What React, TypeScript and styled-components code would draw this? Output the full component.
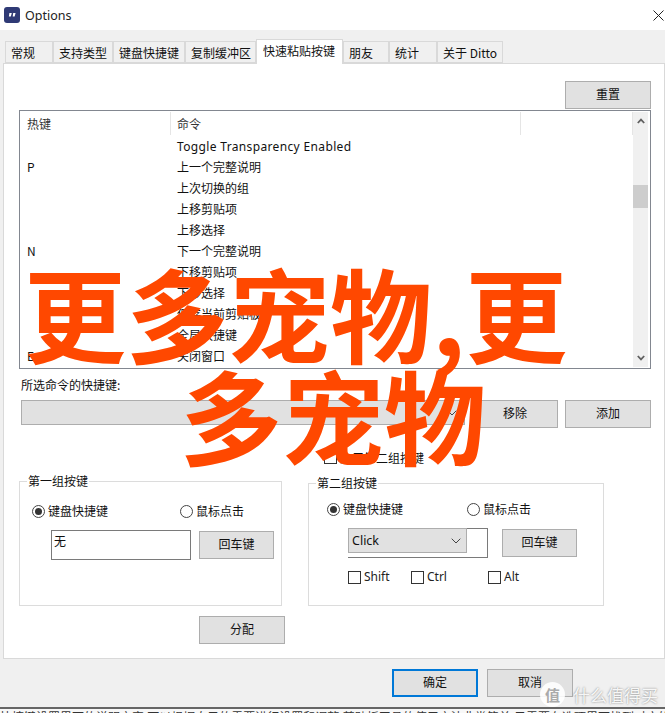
import styled, { createGlobalStyle } from 'styled-components';

const GlobalStyle = createGlobalStyle`
  html, body {
    margin: 0;
    padding: 0;
    background: #fff;
  }
  body {
    width: 665px;
    height: 713px;
    overflow: hidden;
    font-family: 'Noto Sans CJK SC', 'Noto Sans', sans-serif;
    font-size: 12px;
    color: #111;
  }
`;

const Page = styled.div`
  position: relative;
  width: 665px;
  height: 713px;
  overflow: hidden;
  display: flex;
  flex-direction: column;
  background: #f0f0f0;
`;

const TitleBar = styled.div`
  height: 30px;
  flex: none;
  display: flex;
  align-items: center;
  gap: 5px;
  padding: 0 1px 0 4px;
  background: #fff;
`;

const TitleText = styled.span`
  flex: 1;
  font-family: 'Noto Sans', sans-serif;
  font-size: 12.5px;
  color: #222;
`;

const TabBar = styled.div`
  height: 33px;
  flex: none;
  display: flex;
  align-items: flex-end;
  padding-left: 5px;
  position: relative;
  z-index: 1;
`;

const Tab = styled.div<{ $w: number; $active?: boolean }>`
  width: ${({ $w }) => $w}px;
  height: ${({ $active }) => ($active ? 25 : 22)}px;
  flex: none;
  box-sizing: border-box;
  border: 1px solid #d9d9d9;
  border-bottom: ${({ $active }) => ($active ? 'none' : '1px solid #d9d9d9')};
  margin-bottom: ${({ $active }) => ($active ? -1 : 0)}px;
  background: ${({ $active }) => ($active ? '#fff' : '#f0f0f0')};
  padding-left: ${({ $active }) => ($active ? 6 : 5)}px;
  line-height: 21px;
  white-space: nowrap;
`;

const Panel = styled.div`
  width: 662px;
  height: 596px;
  flex: none;
  margin-left: 3px;
  box-sizing: border-box;
  border: 1px solid #d9d9d9;
  background: #fff;
  padding: 17px 13px 0 15px;
  display: flex;
  flex-direction: column;
`;

const Button = styled.button<{ $primary?: boolean }>`
  width: 86px;
  height: 28px;
  flex: none;
  box-sizing: border-box;
  padding: 0 0 3px;
  border: ${({ $primary }) => ($primary ? '2px solid #0078d7' : '1px solid #adadad')};
  background: #e1e1e1;
  font: inherit;
  color: #111;
`;

const ResetRow = styled.div`
  display: flex;
  justify-content: flex-end;
  margin-bottom: 1px;
`;

const ListBox = styled.div`
  height: 259px;
  flex: none;
  box-sizing: border-box;
  border: 1px solid #828790;
  padding: 1px 2px 1px 1px;
  display: flex;
`;

const ListBody = styled.div`
  flex: 1;
  overflow: hidden;
`;

const ListHeader = styled.div`
  display: flex;
  height: 23px;
`;

const HeaderCell = styled.div<{ $w?: number }>`
  width: ${({ $w }) => ($w ? `${$w}px` : 'auto')};
  flex: ${({ $w }) => ($w ? 'none' : 1)};
  box-sizing: border-box;
  padding-left: 6px;
  border-right: 1px solid #e5e5e5;
  line-height: 23px;
  color: #333;
`;

const ListRow = styled.div`
  display: flex;
  height: 21px;
  line-height: 21px;
`;

const KeyCell = styled.div`
  width: 150px;
  flex: none;
  padding-left: 6px;
  box-sizing: border-box;
`;

const CommandCell = styled.div`
  padding-left: 6px;
  white-space: nowrap;
`;

const LatinText = styled.span`
  font-family: 'Noto Sans', sans-serif;
  letter-spacing: 0.35px;
`;

const ScrollBar = styled.div`
  width: 15px;
  flex: none;
  background: #f0f0f0;
  display: flex;
  flex-direction: column;
  align-items: center;
  justify-content: space-between;
  position: relative;
`;

const ScrollArrow = styled.svg`
  display: block;
  margin: 6px 0;
`;

const ScrollThumb = styled.div`
  position: absolute;
  top: 73px;
  left: 0;
  width: 15px;
  height: 23px;
  background: #cdcdcd;
`;

const FieldLabel = styled.div`
  margin: 8px 0 0 2px;
  line-height: 16px;
`;

const ShortcutRow = styled.div`
  display: flex;
  gap: 7px;
  margin: 7px 0 0 2px;
`;

const ShortcutBar = styled.div`
  flex: 1;
  height: 25px;
  box-sizing: border-box;
  border: 1px solid #adadad;
  background: #e1e1e1;
  align-self: flex-start;
  display: flex;
  align-items: center;
  justify-content: flex-end;
  padding-right: 7px;
`;

const GroupsRow = styled.div`
  display: flex;
  margin-top: 21px;
`;

const LeftColumn = styled.div`
  width: 289px;
  flex: none;
  display: flex;
  flex-direction: column;
  padding-top: 24px;
`;

const RightColumn = styled.div`
  flex: 1;
`;

const SecondGroupToggle = styled.label`
  display: flex;
  align-items: center;
  gap: 3px;
  height: 16px;
  margin: 0 0 10px 16px;
`;

const Group = styled.fieldset<{ $w: number; $h: number }>`
  width: ${({ $w }) => $w}px;
  height: ${({ $h }) => $h}px;
  box-sizing: border-box;
  margin: 0;
  padding: 0;
  border: 1px solid #dcdcdc;
  min-width: 0;
`;

const GroupLegend = styled.legend`
  margin-left: 7px;
  padding: 0 1px;
  line-height: 16px;
`;

const RadioRow = styled.div<{ $gap: number; $left: number; $top: number }>`
  display: flex;
  gap: ${({ $gap }) => $gap}px;
  padding-left: ${({ $left }) => $left}px;
  margin-top: ${({ $top }) => $top}px;
`;

const RadioLabel = styled.label<{ $w: number }>`
  width: ${({ $w }) => $w}px;
  display: flex;
  align-items: center;
  gap: 3px;
  line-height: 18px;
`;

const RadioMark = styled.span<{ $checked?: boolean }>`
  width: 13px;
  height: 13px;
  box-sizing: border-box;
  flex: none;
  border: 1px solid #444;
  border-radius: 50%;
  display: flex;
  align-items: center;
  justify-content: center;

  &::after {
    content: '';
    display: ${({ $checked }) => ($checked ? 'block' : 'none')};
    width: 7px;
    height: 7px;
    border-radius: 50%;
    background: #333;
  }
`;

const KeyRow = styled.div<{ $left: number; $gap: number }>`
  display: flex;
  align-items: center;
  gap: ${({ $gap }) => $gap}px;
  padding-left: ${({ $left }) => $left}px;
  margin-top: 10px;
`;

const KeyInput = styled.div`
  width: 140px;
  height: 30px;
  box-sizing: border-box;
  flex: none;
  border: 1px solid #7a7a7a;
  padding: 1px 0 0 2px;
  line-height: 18px;
`;

const ComboFrame = styled.div`
  width: 140px;
  height: 30px;
  box-sizing: border-box;
  flex: none;
  border: 1px solid #7a7a7a;
  border-top: none;
  border-left: none;
  box-shadow: inset 0 1px 0 #7a7a7a;
`;

const Combo = styled.div`
  width: 119px;
  height: 25px;
  box-sizing: border-box;
  border: 1px solid #adadad;
  background: #e1e1e1;
  display: flex;
  align-items: center;
  justify-content: space-between;
  padding: 0 5px 0 3px;
  font-family: 'Noto Sans', sans-serif;
  font-size: 12.5px;
`;

const SmallButton = styled(Button)`
  width: 75px;
`;

const ModifierRow = styled.div`
  display: flex;
  padding-left: 39px;
  margin-top: 11px;
`;

const Modifier = styled.label<{ $w: number }>`
  width: ${({ $w }) => $w}px;
  display: flex;
  align-items: center;
  gap: 3px;
  font-family: 'Noto Sans', sans-serif;
  color: #222;
  line-height: 16px;
`;

const CheckMark = styled.span`
  width: 13px;
  height: 13px;
  box-sizing: border-box;
  flex: none;
  border: 1px solid #333;
  background: #fff;
`;

const AssignButton = styled(Button)`
  margin: 10px 0 0 180px;
`;

const Footer = styled.div`
  height: 48px;
  flex: none;
  box-sizing: border-box;
  display: flex;
  gap: 9px;
  padding: 10px 0 0 392px;
`;

const CutOffStrip = styled.div`
  flex: 1;
  overflow: hidden;
  background: #f8f8f8;
  border-top: 2px solid #666;
  padding-top: 1px;
  line-height: 14px;
  white-space: nowrap;
  color: #333;
`;

const Headline = styled.div`
  position: absolute;
  top: 261px;
  left: 0;
  font-weight: 700;
  font-size: 102px;
  line-height: 102px;
  color: #ff4800;
  pointer-events: none;
  white-space: nowrap;
`;

const HeadlineLine = styled.div<{ $left: number }>`
  margin-left: ${({ $left }) => $left}px;
`;

const Watermark = styled.div`
  position: absolute;
  left: 540px;
  bottom: 6px;
  display: flex;
  align-items: center;
  gap: 8px;
  color: rgba(255, 255, 255, 0.92);
  text-shadow: 0 0 2px #777;
  font-size: 17px;
  line-height: 24px;
  white-space: nowrap;
`;

const WatermarkBadge = styled.span`
  width: 25px;
  height: 25px;
  border-radius: 50%;
  background: rgba(255, 255, 255, 0.88);
  color: #aaa;
  text-shadow: none;
  font-size: 15px;
  font-weight: 700;
  display: flex;
  align-items: center;
  justify-content: center;
`;

const tabs: [string, number][] = [
  ['常规', 48],
  ['支持类型', 60],
  ['键盘快捷键', 72],
  ['复制缓冲区', 71],
  ['快速粘贴按键', 87],
  ['朋友', 46],
  ['统计', 48],
  ['关于 Ditto', 66],
];

const rows: [string, string][] = [
  ['', 'Toggle Transparency Enabled'],
  ['P', '上一个完整说明'],
  ['', '上次切换的组'],
  ['', '上移剪贴项'],
  ['', '上移选择'],
  ['N', '下一个完整说明'],
  ['', '下移剪贴项'],
  ['', '下移选择'],
  ['', '保存当前剪贴板'],
  ['', '全局快捷键'],
  ['E', '关闭窗口'],
];

const AppIcon = () => (
  <svg width="16" height="16" viewBox="0 0 16 16">
    <rect width="16" height="16" rx="3" fill="#2f3a75" />
    <path d="M5.4 6h2.4l-1 3.4H4.9zM9.2 6h2.4l-1 3.4H8.7z" fill="#fff" />
  </svg>
);

const CloseIcon = () => (
  <svg width="11" height="11" viewBox="0 0 11 11">
    <path d="M.5.5l10 10M10.5.5l-10 10" stroke="#222" strokeWidth="1" fill="none" />
  </svg>
);

const Chevron = ({ up }: { up?: boolean }) => (
  <ScrollArrow width="8" height="6" viewBox="0 0 8 6">
    <path d={up ? 'M.8 5L4 1.6 7.2 5' : 'M.8 1L4 4.4 7.2 1'} stroke="#606060" strokeWidth="1.8" fill="none" />
  </ScrollArrow>
);

const ComboArrow = () => (
  <svg width="10" height="6" viewBox="0 0 10 6">
    <path d="M.7.7L5 5l4.3-4.3" stroke="#444" strokeWidth="1" fill="none" />
  </svg>
);

export default function App() {
  return (
    <Page>
      <GlobalStyle />
      <TitleBar>
        <AppIcon />
        <TitleText>Options</TitleText>
        <CloseIcon />
      </TitleBar>

      <TabBar>
        {tabs.map(([label, w]) => (
          <Tab key={label} $w={w} $active={label === '快速粘贴按键'}>
            {label}
          </Tab>
        ))}
      </TabBar>

      <Panel>
        <ResetRow>
          <Button>重置</Button>
        </ResetRow>

        <ListBox>
          <ListBody>
            <ListHeader>
              <HeaderCell $w={150}>热键</HeaderCell>
              <HeaderCell $w={350}>命令</HeaderCell>
              <HeaderCell />
            </ListHeader>
            {rows.map(([key, command]) => (
              <ListRow key={command}>
                <KeyCell>{key}</KeyCell>
                <CommandCell>
                  {command.startsWith('Toggle') ? <LatinText>{command}</LatinText> : command}
                </CommandCell>
              </ListRow>
            ))}
          </ListBody>
          <ScrollBar>
            <Chevron up />
            <ScrollThumb />
            <Chevron />
          </ScrollBar>
        </ListBox>

        <FieldLabel>所选命令的快捷键:</FieldLabel>
        <ShortcutRow>
          <ShortcutBar>
            <ComboArrow />
          </ShortcutBar>
          <Button>移除</Button>
          <Button>添加</Button>
        </ShortcutRow>

        <GroupsRow>
          <LeftColumn>
            <Group $w={263} $h={133}>
              <GroupLegend>第一组按键</GroupLegend>
              <RadioRow $left={12} $gap={18} $top={13}>
                <RadioLabel $w={130}>
                  <RadioMark $checked />
                  键盘快捷键
                </RadioLabel>
                <RadioLabel $w={80}>
                  <RadioMark />
                  鼠标点击
                </RadioLabel>
              </RadioRow>
              <KeyRow $left={31} $gap={8}>
                <KeyInput>无</KeyInput>
                <SmallButton>回车键</SmallButton>
              </KeyRow>
            </Group>
            <AssignButton>分配</AssignButton>
          </LeftColumn>

          <RightColumn>
            <SecondGroupToggle>
              <CheckMark />
              启用第二组按键
            </SecondGroupToggle>
            <Group $w={296} $h={131}>
              <GroupLegend>第二组按键</GroupLegend>
              <RadioRow $left={18} $gap={10} $top={9}>
                <RadioLabel $w={130}>
                  <RadioMark $checked />
                  键盘快捷键
                </RadioLabel>
                <RadioLabel $w={80}>
                  <RadioMark />
                  鼠标点击
                </RadioLabel>
              </RadioRow>
              <KeyRow $left={39} $gap={14}>
                <ComboFrame>
                  <Combo>
                    Click
                    <ComboArrow />
                  </Combo>
                </ComboFrame>
                <SmallButton>回车键</SmallButton>
              </KeyRow>
              <ModifierRow>
                <Modifier $w={63}>
                  <CheckMark />
                  Shift
                </Modifier>
                <Modifier $w={77}>
                  <CheckMark />
                  Ctrl
                </Modifier>
                <Modifier $w={50}>
                  <CheckMark />
                  Alt
                </Modifier>
              </ModifierRow>
            </Group>
          </RightColumn>
        </GroupsRow>
      </Panel>

      <Footer>
        <Button $primary>确定</Button>
        <Button>取消</Button>
      </Footer>

      <CutOffStrip>快捷键设置界面的说明文字,可以根据自己的需要进行设置和调整,剪贴板工具的使用方法非常简单,只需要在选项里面找到对应的功能</CutOffStrip>

      <Headline>
        <HeadlineLine $left={24}>更多宠物,更</HeadlineLine>
        <HeadlineLine $left={180}>多宠物</HeadlineLine>
      </Headline>

      <Watermark>
        <WatermarkBadge>值</WatermarkBadge>
        什么值得买
      </Watermark>
    </Page>
  );
}
